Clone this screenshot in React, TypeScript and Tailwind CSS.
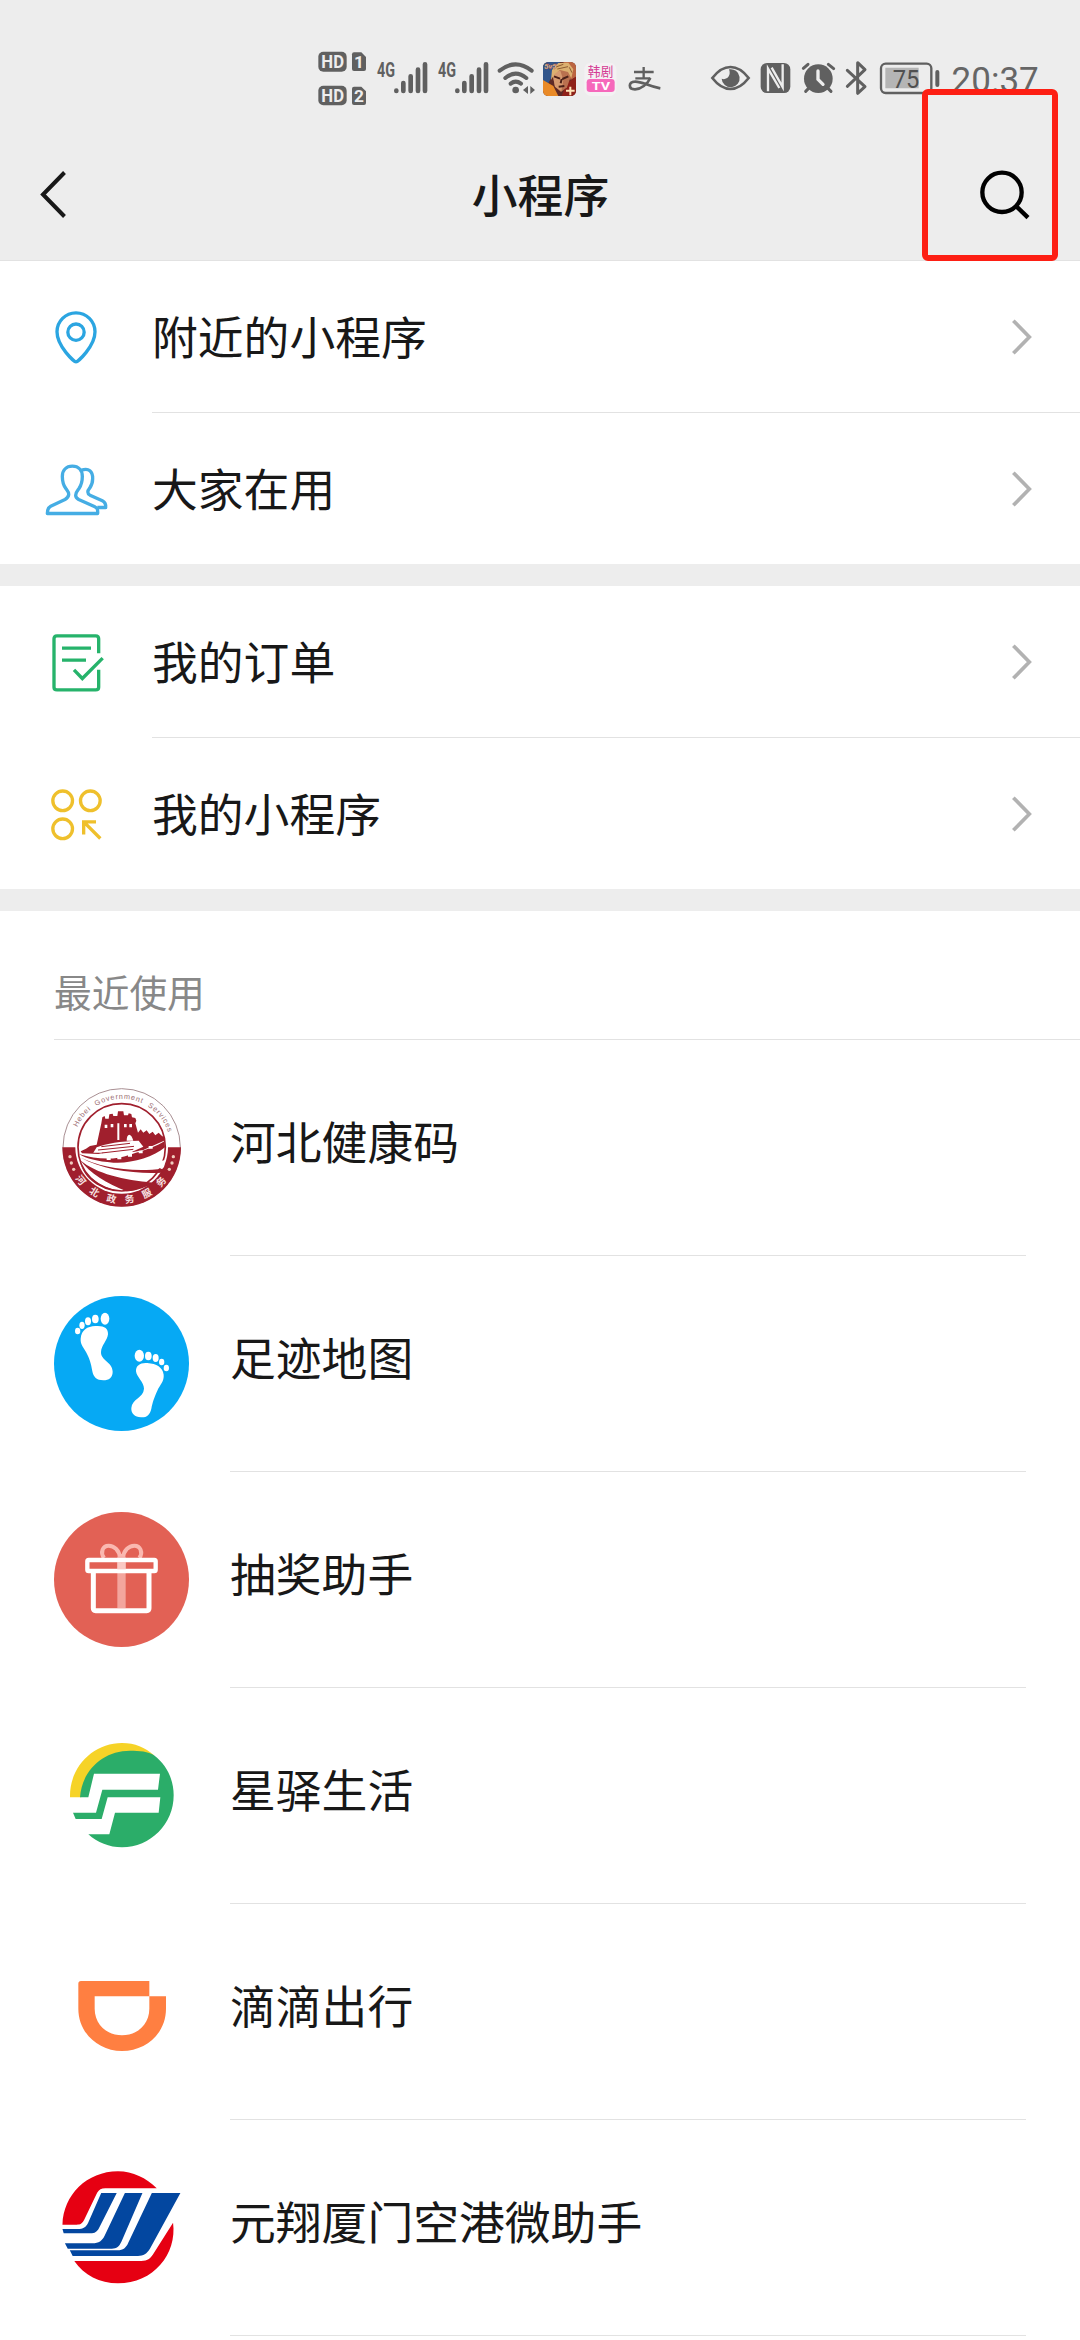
import React from 'react';

const toes = [
  [195, 116, 13, 18],
  [166, 117, 10, 13],
  [144, 124, 9, 12],
  [126, 136, 8, 11],
  [113, 153, 8, 10],
];

const rightToes = [
  [298, 227, 14, 18],
  [325, 228, 10, 13],
  [347, 234, 9, 12],
  [365, 246, 8, 10],
  [379, 264, 8, 10],
];

function LocationIcon() {
  return (
    <svg viewBox="39 100.5 198 198" className="size-[66px]" fill="none" stroke="#2ba5e1" strokeWidth="10">
      <path d="M138 274C133 274 81 228 81 184A57 57 0 0 1 195 184C195 228 143 274 138 274Z" />
      <circle cx="138" cy="185" r="24.500" />
    </svg>
  );
}

function PeopleIcon() {
  return (
    <svg viewBox="39 556.5 198 198" className="size-[66px]" fill="none" stroke="#45ade4" strokeWidth="10" strokeLinejoin="round">
      <path d="M127 587C108 587 97 600 97 618C97 634 102 647 108 655C114 663 117 666 116 673C115 681 112 683 105 687L62 707C54 711 52 717 52 729H203C204 715 201 712 193 708L146 687C139 683 137 681 137 674C137 666 141 662 147 654C153 645 157 634 157 618C157 600 146 587 127 587Z" />
      <path d="M155 599C176 591 189 603 188 625C188 640 184 646 179 653C172 661 171 669 180 674L217 691C225 695 228 701 227 711H202" />
    </svg>
  );
}

function OrderIcon() {
  return (
    <svg viewBox="39 115.5 198 198" className="size-[66px]" fill="none" stroke="#26b36b" strokeWidth="10">
      <path d="M206 188V145Q206 136 197 136H81Q72 136 72 145V290Q72 298 81 298H197Q206 298 206 290V238" />
      <path d="M96 173H183M96 209H168M132 238L157 264L218 203" />
    </svg>
  );
}

function MiniProgramIcon() {
  return (
    <svg viewBox="39 571.5 198 198" className="size-[66px]" fill="none" stroke="#efc02c" strokeWidth="10">
      <circle cx="98" cy="631" r="29.500" />
      <circle cx="181" cy="631" r="29.500" />
      <circle cx="98" cy="715" r="29.500" />
      <path d="M161 732V694H198M162 695L211 744" />
    </svg>
  );
}

function HebeiLogo() {
  return (
    <svg viewBox="72 390 405 405" className="size-[135px]">
      <circle cx="275" cy="592" r="176" fill="#fff" stroke="#a98f93" strokeWidth="3" />
      <path d="M97 592A178 178 0 0 0 453 592Z" fill="#a01f2d" />
      <circle cx="275" cy="592" r="139" fill="#fff" />
      <circle cx="275" cy="592" r="131" fill="none" stroke="#a01f2d" strokeWidth="5" />
      <path d="M152 604L168 596L180 588L200 584L214 520L217 502L224 498L226 506L236 506L238 493L248 491L250 498L262 498L264 484L280 484L282 496L294 496L296 490L304 492L306 502L316 504L319 512L316 520L324 548L332 538L340 548L350 541L358 552L368 545L376 556L386 548L396 558L404 562L402 572L340 600L310 606L262 600L205 612L156 610Z" fill="#a01f2d" />
      <path d="M262 520H268V570H262ZM290 572C290 548 304 548 310 572ZM224 524H232V534H224ZM242 522H250V532H242ZM282 522H290V532H282ZM298 522H306V532H298Z" fill="#fff" />
      <path d="M200 592C230 580 270 574 326 572L340 590L300 608H190Z" fill="#fff" />
      <path d="M214 590L300 580M204 600L312 589M215 609L310 598" stroke="#a01f2d" strokeWidth="3" />
      <path d="M147 612C200 628 250 632 300 614C350 600 380 588 403 574L405 592C370 622 300 642 250 638C200 634 170 626 147 612Z" fill="#a01f2d" />
      <path d="M230 622H242V630H230ZM262 620H274V628H262ZM294 612H306V620H294ZM326 602H338V610H326ZM356 588H368V596H356Z" fill="#fff" />
      <path d="M147 618C190 640 300 664 405 630L402 652C330 672 220 656 147 618Z" fill="#fff" />
      <path d="M150 622C210 652 300 668 400 656L396 668C320 672 220 662 150 622Z" fill="#a01f2d" />
      <path d="M150 630C200 672 280 690 370 698C350 712 320 722 290 724C230 700 180 670 150 630Z" fill="#a01f2d" />
      <path d="M152 642C170 682 210 708 262 722C210 718 166 690 152 642Z" fill="#a01f2d" />
      <g fill="#f0ccbe">
        <circle cx="120" cy="620" r="5" />
        <circle cx="124" cy="639" r="5" />
        <circle cx="131" cy="658" r="5" />
        <circle cx="430" cy="620" r="5" />
        <circle cx="426" cy="639" r="5" />
        <circle cx="418" cy="658" r="5" />
      </g>
      <path id="hebei-top" d="M131 564A147 147 0 0 1 419 564" fill="none" />
      <path id="hebei-bottom" d="M132 680A168 168 0 0 0 418 680" fill="none" />
      <text fill="#9a6b70" fontSize="22" fontFamily="Liberation Sans, sans-serif">
        <textPath href="#hebei-top" startOffset="34" textLength="350">Hebei&#160; Government&#160; Services</textPath>
      </text>
      <text fill="#f7e3e3" fontSize="29" fontWeight="bold" fontFamily="Noto Sans CJK SC, sans-serif">
        <textPath href="#hebei-bottom" startOffset="6" textLength="322">河北政务服务</textPath>
      </text>
    </svg>
  );
}

function FootprintLogo() {
  return (
    <svg viewBox="42 48 405 405" className="size-[135px]">
      <circle cx="244.500" cy="250.500" r="202.500" fill="#06a9f4" />
      <g fill="#fff">
        {toes.map(([x, y, rx, ry]) => (
          <ellipse key={x} cx={x} cy={y} rx={rx} ry={ry} />
        ))}
        <path d="M122 176C124 150 142 139 166 138C192 136 205 144 204 163C202 182 184 196 183 216C182 242 218 246 218 275C218 292 207 301 190 301C170 301 160 291 157 274C153 250 149 236 138 216C128 198 121 192 122 176Z" />
        {rightToes.map(([x, y, rx, ry]) => (
          <ellipse key={x} cx={x} cy={y} rx={rx} ry={ry} />
        ))}
        <path d="M288 274C287 256 302 247 322 249C350 251 368 262 371 284C373 304 360 314 352 332C342 354 338 366 334 386C330 404 320 413 303 412C284 411 273 400 274 384C276 356 310 354 312 326C312 306 290 292 288 274Z" />
      </g>
    </svg>
  );
}

function GiftLogo() {
  return (
    <svg viewBox="42 66 405 405" className="size-[135px]" fill="none">
      <circle cx="244.500" cy="268.500" r="202.500" fill="#e26155" />
      <path d="M241 206C238 180 222 167 206 167C188 167 180 187 192 204M248 206C251 180 267 167 283 167C301 167 310 187 298 204" stroke="#fab8b0" strokeWidth="12" />
      <path d="M232 200H257V354H232Z" fill="#f3a59d" />
      <rect x="142" y="210" width="205" height="33" rx="4" stroke="#fff" strokeWidth="13" />
      <path d="M160 246V355Q160 362 167 362H320Q327 362 327 355V246" stroke="#fff" strokeWidth="15" />
      <path d="M232 216H257V238H232Z" fill="#fac9c4" />
    </svg>
  );
}

function XingyiLogo() {
  return (
    <svg viewBox="42 54 405 405" className="size-[135px]">
      <path d="M90 262C88 170 160 99 246 99C285 99 315 112 342 136L270 130C190 130 130 190 124 262Z" fill="#f6d327" />
      <path d="M120 262C126 180 190 122 270 122C298 122 325 124 342 136C380 165 401 208 401 256C401 342 332 412 246 412C208 412 172 398 145 373H208L225 308H356L361 262H203L185 327H107L99 308H168L187 239H354L360 191H162L145 262Z" fill="#2bad69" />
    </svg>
  );
}

function DidiLogo() {
  return (
    <svg viewBox="42 42 405 405" className="size-[135px]">
      <path d="M123 153H328V199H378V236C378 310 318 363 246 363C174 363 115 308 115 236V161Q115 153 123 153ZM164 199V236C164 284 202 316 246 316C292 316 328 282 328 236V199Z" fill="#ff7f41" fillRule="evenodd" />
    </svg>
  );
}

function AirportLogo() {
  return (
    <svg viewBox="34.3 60 330.75 405" preserveAspectRatio="none" className="size-[135px]">
      <path d="M55 254C57 165 115 94 191 94C228 94 260 114 286 145H160C150 145 145 149 140 158L108 240C103 251 99 254 90 254Z" fill="#e60012" />
      <path d="M84 363H248C264 363 272 354 279 339L326 248C336 342 278 430 191 430C146 430 108 405 84 363Z" fill="#e60012" />
      <g fill="#0347a0">
        <path d="M150 159H188L145 263C140 275 134 280 124 280H58L55 267H92C106 267 113 261 118 248Z" />
        <path d="M208 159H251L200 304C194 320 188 326 176 326H68L61 310H128C145 310 152 302 158 288Z" />
        <path d="M274 159H344L270 325C262 342 253 348 240 348H80L73 331H190C204 331 211 323 216 309Z" />
      </g>
    </svg>
  );
}

const menuGroups = [
  [
    { label: '附近的小程序', icon: LocationIcon },
    { label: '大家在用', icon: PeopleIcon },
  ],
  [
    { label: '我的订单', icon: OrderIcon },
    { label: '我的小程序', icon: MiniProgramIcon },
  ],
];

const recents = [
  { label: '河北健康码', logo: HebeiLogo },
  { label: '足迹地图', logo: FootprintLogo },
  { label: '抽奖助手', logo: GiftLogo },
  { label: '星驿生活', logo: XingyiLogo },
  { label: '滴滴出行', logo: DidiLogo },
  { label: '元翔厦门空港微助手', logo: AirportLogo },
];

function HdBadges() {
  return (
    <svg viewBox="0 0 220 270" className="h-[90px] w-[73.33px]" fontFamily="Roboto, sans-serif" fontWeight="bold">
      <g fill="#606060">
        <rect x="55" y="65" width="85" height="60" rx="15" />
        <path d="M162 67H184L198 81V117Q198 123 192 123H162Q156 123 156 117V73Q156 67 162 67Z" />
        <rect x="55" y="167" width="85" height="59" rx="15" />
        <path d="M162 170H184L198 184V219Q198 225 192 225H162Q156 225 156 219V176Q156 170 162 170Z" />
      </g>
      <g fill="#ededed" fontSize="54">
        <text x="64" y="115" textLength="68" lengthAdjust="spacingAndGlyphs">HD</text>
        <text x="162" y="115" fontSize="52">1</text>
        <text x="64" y="216" textLength="68" lengthAdjust="spacingAndGlyphs">HD</text>
        <text x="162" y="216" fontSize="52">2</text>
      </g>
    </svg>
  );
}

function Signal() {
  return (
    <svg viewBox="220 0 183 270" className="h-[90px] w-[61px]">
      <text x="232" y="140" fill="#606060" fontSize="58" fontWeight="bold" fontFamily="Roboto, sans-serif" textLength="54" lengthAdjust="spacingAndGlyphs">4G</text>
      <path d="M290 182V183M311 159V183M333 139V183M355 119V183M376 103V183" stroke="#606060" strokeWidth="14" strokeLinecap="round" />
    </svg>
  );
}

function StatusIcons() {
  return (
    <div className="flex h-[90px] pl-[300px]">
      <HdBadges />
      <Signal />
      <Signal />
      <svg viewBox="586 0 134 270" className="h-[90px] w-[44.67px]" fill="none" stroke="#606060" strokeWidth="12" strokeLinecap="round">
        <path d="M600 122Q648 84 696 122M617 144Q648 118 680 144M633 161Q648 149 664 161" />
        <circle cx="648" cy="180" r="10" fill="#606060" stroke="none" />
        <path d="M670 180L685 168V192ZM706 180L692 168V192Z" fill="#606060" stroke="none" />
      </svg>
      <svg viewBox="720 0 130 270" className="h-[90px] w-[43.33px]">
        <clipPath id="hero">
          <rect x="729" y="96" width="99" height="102" rx="16" />
        </clipPath>
        <g clipPath="url(#hero)">
          <path d="M729 96H828V198H729Z" fill="#5e2a26" />
          <path d="M729 96H780L745 160L729 165Z" fill="#31558b" />
          <path d="M729 150L760 168L775 198H729Z" fill="#e98a27" />
          <path d="M790 96H828V140L812 150Z" fill="#bb6541" />
          <path d="M800 160L828 140V198H785Z" fill="#8f2119" />
          <path d="M757 128L770 110L802 112L813 138L801 172L783 186L765 170Z" fill="#b9714f" />
          <path d="M781 122L790 150L784 184L765 170L757 128Z" fill="#d69a70" />
          <path d="M753 150L756 120L775 99L805 98L820 118L814 145L804 126L780 120L764 132Z" fill="#dcb070" />
          <path d="M765 112L790 103M772 117L804 110M808 112L816 128" stroke="#8d5a33" strokeWidth="3" />
          <path d="M762 139L780 146M787 147L805 139M776 170L793 168M785 147L782 160" stroke="#4a2018" strokeWidth="6" />
          <path d="M798 182H824M811 170V196" stroke="#ffe5b9" strokeWidth="6" />
          <text x="733" y="116" fill="#fff1d3" stroke="#983423" strokeWidth="1" fontSize="23" fontWeight="bold" fontStyle="italic" fontFamily="Roboto, sans-serif">5v5</text>
        </g>
      </svg>
      <svg viewBox="850 0 130 270" className="h-[90px] w-[43.33px]">
        <rect x="854" y="98" width="96" height="100" rx="20" fill="#f4f1f3" />
        <text x="864" y="139" fill="#d43c94" fontSize="38" fontFamily="Noto Sans CJK SC, sans-serif" textLength="77">韩剧</text>
        <rect x="861" y="147" width="84" height="39" rx="10" fill="#f668bb" />
        <text x="876" y="179" fill="#fff" fontSize="34" fontWeight="bold" fontFamily="Roboto, sans-serif" textLength="55" lengthAdjust="spacingAndGlyphs">TV</text>
      </svg>
      <svg viewBox="980 0 160 270" className="h-[90px] w-[53.33px]" fill="none" stroke="#606060">
        <path d="M1001 126H1060M1030 111V143M1005 145H1050" strokeWidth="7" />
        <path d="M1050 144C1041 163 1022 178 1004 178C983 178 984 155 1003 155C1026 154 1043 169 1080 175" strokeWidth="8" />
      </svg>
      <svg viewBox="80 0 148 270" className="ml-[26.67px] h-[90px] w-[49.33px]">
        <path d="M96 144C130 100 171 100 205 144C171 188 130 188 96 144Z" fill="none" stroke="#606060" strokeWidth="8" />
        <path d="M146 118A27 27 0 1 1 124 146C138 152 154 138 146 118Z" fill="#606060" />
      </svg>
      <svg viewBox="228 0 128 270" className="h-[90px] w-[42.67px]">
        <rect x="242" y="99" width="89" height="90" rx="19" fill="#606060" />
        <path d="M264 184V116L298 174M308 103V171L275 113" stroke="#ededed" strokeWidth="7" fill="none" />
      </svg>
      <svg viewBox="356 0 124 270" className="h-[90px] w-[41.33px]" stroke="#606060" strokeWidth="9" strokeLinecap="round" fill="none">
        <circle cx="414" cy="146" r="43" fill="#606060" stroke="none" />
        <path d="M369 115L383 103M444 103L460 116M376 184L387 173M452 184L441 173" />
        <path d="M413 123V148L428 163" stroke="#ededed" strokeWidth="10" />
      </svg>
      <svg viewBox="480 0 110 270" className="h-[90px] w-[36.67px]" fill="none" stroke="#606060" strokeWidth="9" strokeLinecap="round" strokeLinejoin="round">
        <path d="M502 121L555 170L533 190V98L555 119L502 169" />
      </svg>
      <svg viewBox="590 0 210 270" className="h-[90px] w-[70px]">
        <rect x="602" y="101" width="151" height="88" rx="14" fill="none" stroke="#606060" strokeWidth="7" />
        <path d="M615 113H715V175H615Z" fill="#b5b5b5" />
        <path d="M771 126V165" stroke="#606060" strokeWidth="12" strokeLinecap="round" />
        <text x="637" y="173" fill="#505050" fontSize="79" fontFamily="Roboto, sans-serif" textLength="80" lengthAdjust="spacingAndGlyphs">75</text>
      </svg>
      <span className="pt-[30px] pl-[5px] font-['Roboto',sans-serif] text-[35px] leading-[41px] text-[#666]">20:37</span>
    </div>
  );
}

function Chevron() {
  return (
    <svg viewBox="330 712 72 120" className="mr-[46px] ml-auto h-[40px] w-[24px]" fill="none" stroke="#b2b2b2" strokeWidth="11">
      <path d="M340 723L388 772L340 821" />
    </svg>
  );
}

function App() {
  return (
    <div className="relative h-[2340px] w-[1080px] overflow-hidden bg-white font-['Noto_Sans_CJK_SC',sans-serif] text-[45.8px] leading-[66px] text-[#181818]">
      <header className="h-[261px] border-b border-[#e2e2e2] bg-[#ededed] pt-[30px]">
        <StatusIcons />
        <div className="mt-[21px] flex h-[107px] items-center justify-between pr-[50px] pl-[38px]">
          <svg viewBox="0 0 50 50" className="size-[50px]" fill="none" stroke="#181818" strokeWidth="4">
            <path d="M26.500 2.500L5 24.500L26.500 46.500" />
          </svg>
          <h1 className="pb-[4px] pl-[13px] font-medium">小程序</h1>
          <svg viewBox="240 268 150 150" className="size-[50px]" fill="none" stroke="#000" strokeWidth="13">
            <circle cx="306" cy="335" r="59" />
            <path d="M349 377L384 411" />
          </svg>
        </div>
      </header>

      {menuGroups.map((group, i) => (
        <section key={i} className="border-b-[22px] border-[#ededed]">
          {group.map(({ label, icon: Icon }, j) => (
            <div key={label} className="flex pl-[43px]">
              <div className="flex h-[151px] w-[109px] items-center">
                <Icon />
              </div>
              <div className={j === 0 ? 'flex h-[152px] flex-1 items-center border-b border-[#e2e2e2]' : 'flex h-[151px] flex-1 items-center'}>
                <span className="pb-[4px]">{label}</span>
                <Chevron />
              </div>
            </div>
          ))}
        </section>
      ))}

      <section className="pl-[54px]">
        <h2 className="flex h-[129px] items-end border-b border-[#e2e2e2] pb-[20px] text-[37.7px] leading-[56px] text-[#888]">最近使用</h2>
        {recents.map(({ label, logo: Logo }) => (
          <div key={label} className="flex h-[216px] pr-[54px]">
            <div className="flex h-[215px] w-[176px] items-center">
              <Logo />
            </div>
            <div className="flex flex-1 items-center border-b border-[#e2e2e2] pb-[15px]">{label}</div>
          </div>
        ))}
      </section>

      {/* highlight around the search button */}
      <div className="absolute top-[89px] left-[922px] h-[172px] w-[136px] rounded-[6px] border-[6px] border-[#fd1f14]" />
    </div>
  );
}

export default App;
